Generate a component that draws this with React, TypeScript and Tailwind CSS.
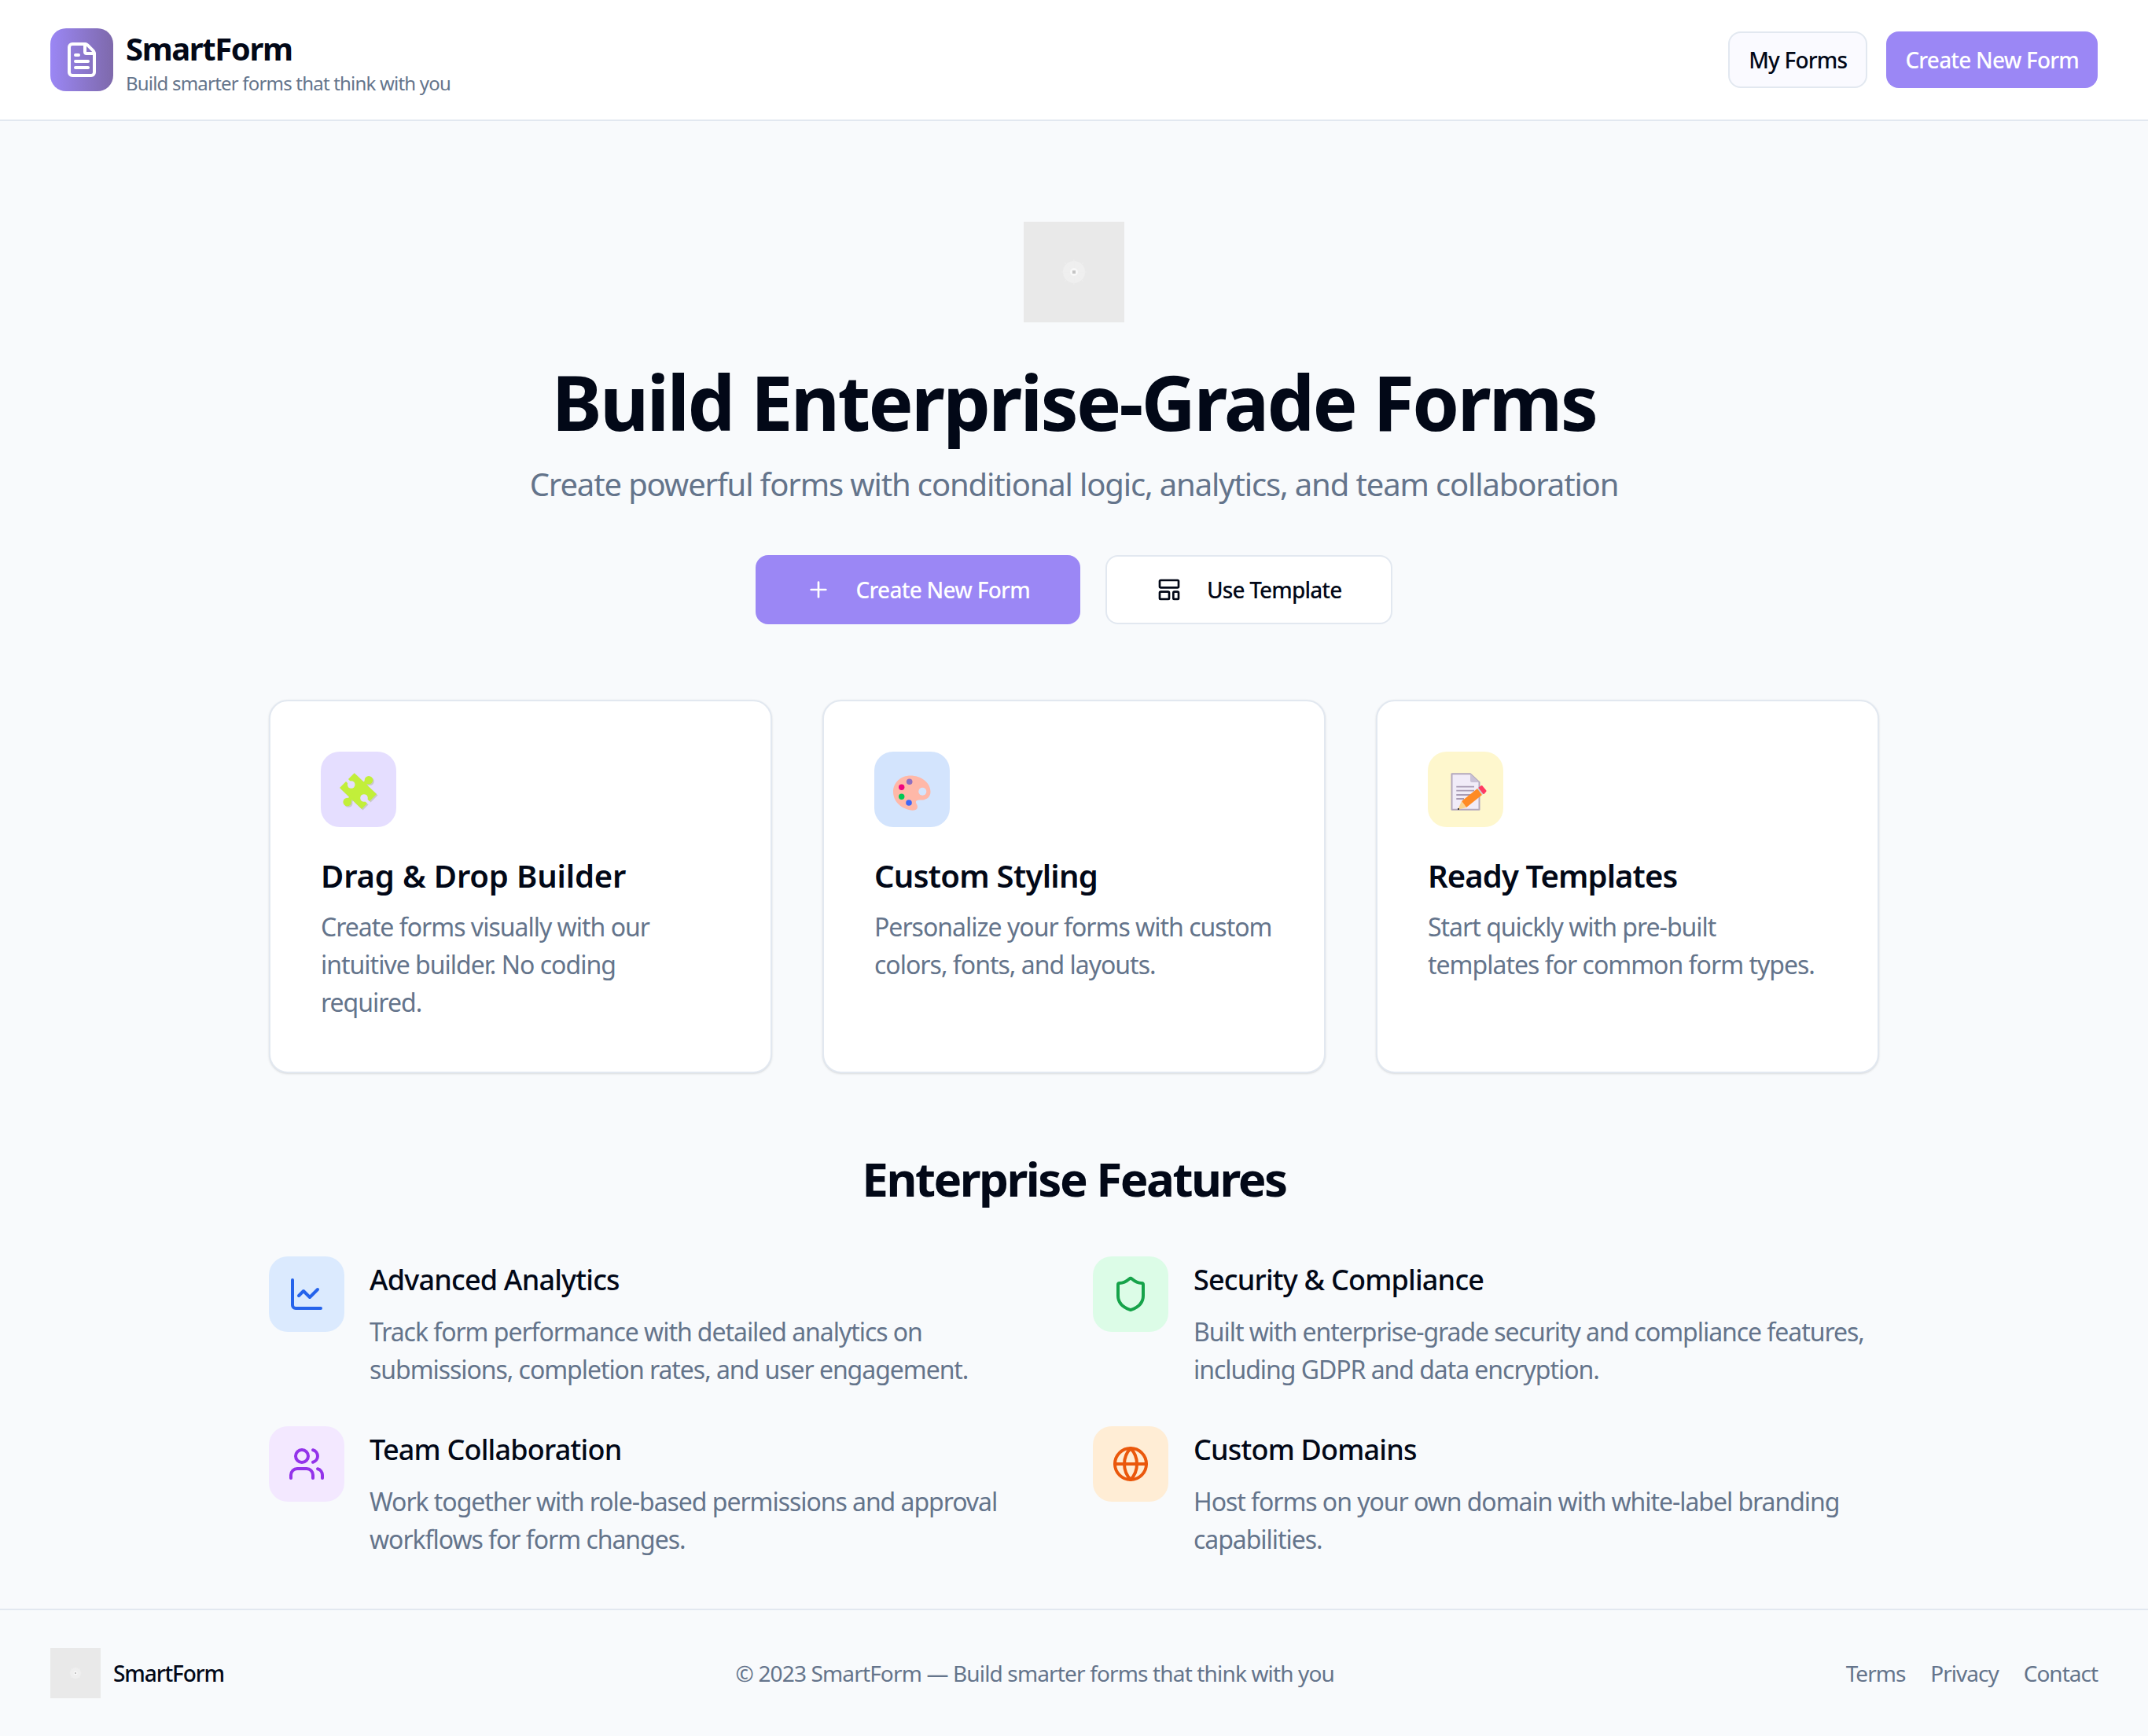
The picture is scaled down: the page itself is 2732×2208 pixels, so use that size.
import { ChartLine, FileText, Globe, LayoutTemplate, Plus, Shield, Users } from "lucide-react";
import type { ReactNode } from "react";

const Placeholder = ({ className }: { className: string }) => (
  <div className={`bg-[#e9e9e9] shrink-0 ${className}`}>
    <svg viewBox="0 0 128 128" className="w-full h-full">
      <circle cx="64" cy="64" r="14" fill="#efefef" />
      <g stroke="#eeeeee" strokeWidth="1">
        <path d="M64 48v32M48 64h32M52 52l24 24M76 52 52 76" />
      </g>
      <circle cx="64" cy="64" r="5" fill="#f8f8f8" />
      <rect x="62" y="62" width="4" height="4" fill="#c4c4c4" />
    </svg>
  </div>
);

const PuzzleShape = ({ fill }: { fill: string }) => (
  <g fill={fill} stroke={fill}>
    <path strokeWidth="0" d="M0 22 18.700 3.300 47 30 28 49z" />
    <path strokeWidth="5" d="M30 18 37 12.300M18 31 9.700 40" fill="none" />
    <circle cx="37" cy="12.300" r="5.300" strokeWidth="0" />
    <circle cx="9.700" cy="40" r="5.300" strokeWidth="0" />
  </g>
);

const PuzzleIcon = () => (
  <svg viewBox="0 0 48 48" className="w-12 h-12 overflow-visible">
    <g transform="translate(1.500 1.500)">
      <PuzzleShape fill="#c9c9c9" />
    </g>
    <PuzzleShape fill="#c2ef3a" />
    <g fill="#e5deff" stroke="#e5deff">
      <circle cx="14.700" cy="18" r="4.800" strokeWidth="0" />
      <path strokeWidth="4" d="M14 17 7 10" fill="none" />
      <circle cx="31" cy="35" r="4.800" strokeWidth="0" />
      <path strokeWidth="4" d="M32 36 39 43" fill="none" />
    </g>
  </svg>
);

const PaletteIcon = () => (
  <svg viewBox="0 0 48 48" className="w-12 h-12 overflow-visible">
    <path fill="#ffb8a8" d="M22 6.500C35 6.500 47.500 15 47.500 27 47.500 34 42 37.500 36 37.500 31 37.500 28.500 38 29 41 30.500 44 32 46 30 49 28 51 24 51 20 50 8 47 0 38 0 27 0 15 10 6.500 22 6.500Z" />
    <circle cx="37.300" cy="26.700" r="5" fill="#d3e4fd" />
    <circle cx="20.700" cy="14.300" r="3.800" fill="#8f6fc0" />
    <circle cx="10.700" cy="21.300" r="3.700" fill="#f0047f" />
    <circle cx="10.700" cy="33.300" r="3.700" fill="#00c853" />
    <circle cx="20" cy="41" r="3.800" fill="#3d66f5" />
  </svg>
);

const MemoIcon = () => (
  <svg viewBox="0 0 48 48" className="w-12 h-12 overflow-visible">
    <path fill="#f1ecf8" stroke="#b3a8bd" strokeWidth="2" strokeLinejoin="round" d="M6.500 4.300H30L41.500 15V49.700H6.500z" />
    <path fill="#c9c1d6" d="M30 4.300 41.500 15H32a2 2 0 0 1-2-2z" />
    <path stroke="#a89bb4" strokeWidth="1.800" fill="none" d="M12.300 20.700H35M12.300 25.700H35M12.300 31H30M12.300 36H22" />
    <path fill="#ff8b25" d="M19 39 39 23 45 31 25 47z" />
    <path fill="#cfcfcf" d="M39 23 41 21.500 47 29.500 45 31z" />
    <path fill="#ff3a63" stroke="#ff3a63" strokeWidth="2" strokeLinejoin="round" d="M41.500 22 44.500 20 49.500 26 47 29z" />
    <path fill="#fbd38d" d="M19 39 25 47 14 50z" />
    <path fill="#3b3b3b" d="M14 48h2v2h-2z" />
  </svg>
);

const Card = ({ icon, tile, title, titleClass, text }: { icon: ReactNode; tile: string; title: string; titleClass: string; text: ReactNode }) => (
  <article className="bg-white border-2 border-[#e2e8f0] rounded-3xl p-16 shadow-sm">
    <div className={`w-24 h-24 rounded-3xl flex items-center justify-center mb-8 ${tile}`}>{icon}</div>
    <h3 className={`text-[40px] leading-[60px] font-semibold mb-[11px] text-[#020817] ${titleClass}`}>{title}</h3>
    <p className="text-[32px] leading-[48px] text-[#64748b] tracking-[-1px] whitespace-nowrap">{text}</p>
  </article>
);

const Feature = ({ icon: Icon, tile, color, title, text }: { icon: any; tile: string; color: string; title: string; text: ReactNode }) => (
  <div className="flex gap-8">
    <div className={`w-24 h-24 rounded-3xl flex items-center justify-center shrink-0 ${tile} ${color}`}>
      <Icon size={48} />
    </div>
    <div>
      <h3 className="text-[36px] leading-[60px] font-medium mb-3 text-[#020817] tracking-[-0.8px]">{title}</h3>
      <p className="text-[32px] leading-[48px] text-[#64748b] tracking-[-1.050px] whitespace-nowrap">{text}</p>
    </div>
  </div>
);

export default function App() {
  return (
    <div className="min-h-[2208px] bg-[#f8fafc] text-[#020817] font-['Noto_Sans',sans-serif]">
      <header className="h-[154px] bg-white border-b-2 border-[#e2e8f0] px-16 flex items-center justify-between">
        <div className="flex items-center gap-4">
          <div className="w-20 h-20 rounded-[20px] bg-gradient-to-r from-[#9b87f5] to-[#7e69ab] flex items-center justify-center text-white">
            <FileText size={48} />
          </div>
          <div className="pt-1">
            <div className="text-[40px] leading-[56px] font-bold tracking-[-1.400px]">SmartForm</div>
            <div className="text-2xl leading-8 text-[#64748b] tracking-[-0.800px]">Build smarter forms that think with you</div>
          </div>
        </div>
        <div className="flex gap-6">
          <button className="h-[72px] px-6 rounded-2xl border-2 border-[#e2e8f0] bg-[#fafaff] text-[28px] font-medium tracking-[-0.800px]">My Forms</button>
          <button className="h-[72px] px-6 rounded-2xl bg-[#9b87f5] text-white text-[28px] font-medium tracking-[-0.800px]">Create New Form</button>
        </div>
      </header>

      <main className="pt-32">
        <section className="flex flex-col items-center">
          <Placeholder className="w-32 h-32" />
          <h1 className="mt-[41px] text-[96px] leading-[120px] font-bold tracking-[-2.700px]">Build Enterprise-Grade Forms</h1>
          <p className="mt-[17px] text-[40px] leading-[56px] text-[#64748b] tracking-[-1.140px]">Create powerful forms with conditional logic, analytics, and team collaboration</p>
          <div className="mt-[62px] flex gap-8">
            <button className="h-[88px] px-16 rounded-2xl bg-[#9b87f5] text-white text-[28px] font-medium tracking-[-0.750px] flex items-center gap-8">
              <Plus size={32} />
              Create New Form
            </button>
            <button className="h-[88px] px-[63px] rounded-2xl bg-white border-2 border-[#e2e8f0] text-[28px] font-medium tracking-[-0.850px] flex items-center gap-8">
              <LayoutTemplate size={32} />
              Use Template
            </button>
          </div>
        </section>

        <section className="w-[2048px] mx-auto mt-24 grid grid-cols-3 gap-16">
          <Card tile="bg-[#e5deff]" icon={<PuzzleIcon />} title="Drag & Drop Builder" titleClass="tracking-[-0.150px]" text={<>Create forms visually with our<br />intuitive builder. No coding<br />required.</>} />
          <Card tile="bg-[#d3e4fd]" icon={<PaletteIcon />} title="Custom Styling" titleClass="tracking-[-0.700px]" text={<>Personalize your forms with custom<br />colors, fonts, and layouts.</>} />
          <Card tile="bg-[#fef7cd]" icon={<MemoIcon />} title="Ready Templates" titleClass="tracking-[-0.900px]" text={<>Start quickly with pre-built<br />templates for common form types.</>} />
        </section>

        <section className="w-[2048px] mx-auto mt-24">
          <h2 className="text-[60px] leading-[76px] font-bold text-center mb-[61px] tracking-[-2.500px]">Enterprise Features</h2>
          <div className="grid grid-cols-2 gap-x-12 gap-y-12">
            <Feature icon={ChartLine} tile="bg-[#dbeafe]" color="text-[#2563eb]" title="Advanced Analytics" text={<>Track form performance with detailed analytics on<br />submissions, completion rates, and user engagement.</>} />
            <Feature icon={Shield} tile="bg-[#dcfce7]" color="text-[#16a34a]" title="Security & Compliance" text={<>Built with enterprise-grade security and compliance features,<br />including GDPR and data encryption.</>} />
            <Feature icon={Users} tile="bg-[#f3e8ff]" color="text-[#9333ea]" title="Team Collaboration" text={<>Work together with role-based permissions and approval<br />workflows for form changes.</>} />
            <Feature icon={Globe} tile="bg-[#ffedd5]" color="text-[#ea580c]" title="Custom Domains" text={<>Host forms on your own domain with white-label branding<br />capabilities.</>} />
          </div>
        </section>
      </main>

      <footer className="mt-16 border-t-2 border-[#e2e8f0] px-16 py-12 flex items-center justify-between">
        <div className="flex items-center gap-4">
          <Placeholder className="w-16 h-16" />
          <span className="text-[28px] font-medium tracking-[-1.100px]">SmartForm</span>
        </div>
        <div className="text-[28px] text-[#64748b] tracking-[-0.850px]">© 2023 SmartForm — Build smarter forms that think with you</div>
        <div className="flex gap-8 text-[28px] text-[#64748b] tracking-[-1px]">
          <span>Terms</span>
          <span>Privacy</span>
          <span>Contact</span>
        </div>
      </footer>
    </div>
  );
}
